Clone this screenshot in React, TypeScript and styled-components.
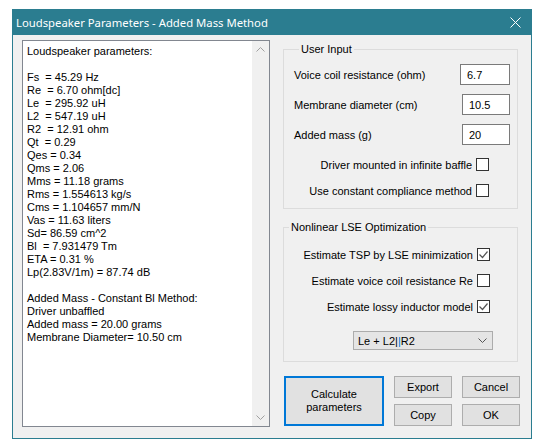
import styled, { createGlobalStyle } from 'styled-components'

const GlobalStyle = createGlobalStyle`
  body {
    margin: 0;
    background: #fff;
    font-family: 'Liberation Sans', Arial, sans-serif;
    font-size: 11px;
    color: #000;
  }
  * {
    box-sizing: border-box;
  }
`

const Page = styled.div`
  padding: 9px 0 0 12px;
`

const Window = styled.div`
  width: 520px;
  height: 430px;
  border: 1px solid #2b7d90;
  background: #f0f0f0;
  display: flex;
  flex-direction: column;
`

const TitleBar = styled.div`
  height: 25px;
  background: #2b7d90;
  color: #fff;
  display: flex;
  align-items: center;
  justify-content: space-between;
  padding: 0 10px 0 3px;
  font-family: 'Noto Sans', 'Segoe UI', sans-serif;
  font-size: 11.3px;
`

const CloseIcon = styled.svg`
  width: 11px;
  height: 11px;
`

const Body = styled.div`
  display: flex;
  gap: 13px;
  padding: 5px 13px 0 9px;
`

const TextPanel = styled.div`
  width: 248px;
  height: 387px;
  border: 1px solid #828790;
  background: #fff;
  display: flex;
`

const Output = styled.pre`
  flex: 1;
  margin: 0;
  padding: 4px 0 0 4px;
  font-family: 'Liberation Sans', Arial, sans-serif;
  font-size: 11px;
  line-height: 13px;
  white-space: pre;
`

const ScrollBar = styled.div`
  width: 17px;
  background: #f0f0f0;
  display: flex;
  flex-direction: column;
  justify-content: space-between;
  align-items: center;
  padding: 6px 0 6px;
`

const Arrow = styled.svg`
  width: 9px;
  height: 5px;
`

const RightColumn = styled.div`
  width: 235px;
  display: flex;
  flex-direction: column;
  gap: 12px;
`

const Group = styled.fieldset<{ $top: number; $pad: string }>`
  margin: ${({ $top }) => $top}px 0 0;
  border: 1px solid #dcdcdc;
  padding: ${({ $pad }) => $pad};
  display: flex;
  flex-direction: column;
  min-width: 0;
`

const Legend = styled.legend`
  margin-left: 5px;
  padding: 0 2px;
  line-height: 13px;
`

const InputRow = styled.div`
  display: flex;
  align-items: center;
  justify-content: space-between;
  height: 21px;
`

const Field = styled.div<{ $w: number }>`
  width: ${({ $w }) => $w}px;
  height: 21px;
  border: 1px solid #7a7a7a;
  background: #fff;
  padding: 0 0 0 6px;
  display: flex;
  align-items: center;
`

const CheckRow = styled.label<{ $right: number }>`
  display: flex;
  align-items: center;
  justify-content: flex-end;
  gap: 4px;
  height: 13px;
  padding-right: ${({ $right }) => $right}px;
`

const Box = styled.span`
  width: 13px;
  height: 13px;
  border: 1px solid #333;
  background: #fff;
  display: flex;
  align-items: center;
  justify-content: center;
`

const Select = styled.div`
  align-self: flex-end;
  margin-right: 24px;
  width: 140px;
  height: 19px;
  border: 1px solid #acacac;
  background: #e5e5e5;
  display: flex;
  align-items: center;
  justify-content: space-between;
  padding: 0 5px 0 4px;
`

const Caret = styled.span`
  color: #0078d7;
`

const Buttons = styled.div`
  display: grid;
  grid-template-columns: 100px 58px 58px;
  grid-template-rows: 22px 22px;
  column-gap: 10px;
  row-gap: 6px;
  margin: 2px 0 0 1px;
`

const Button = styled.button<{ $primary?: boolean }>`
  font: inherit;
  color: #000;
  background: #e1e1e1;
  border: ${({ $primary }) => ($primary ? '2px solid #0078d7' : '1px solid #adadad')};
  padding: 0;
  grid-row: ${({ $primary }) => ($primary ? '1 / span 2' : 'auto')};
  line-height: 13px;
`

const report = `Loudspeaker parameters:

Fs  = 45.29 Hz
Re  = 6.70 ohm[dc]
Le  = 295.92 uH
L2  = 547.19 uH
R2  = 12.91 ohm
Qt  = 0.29
Qes = 0.34
Qms = 2.06
Mms = 11.18 grams
Rms = 1.554613 kg/s
Cms = 1.104657 mm/N
Vas = 11.63 liters
Sd= 86.59 cm^2
Bl  = 7.931479 Tm
ETA = 0.31 %
Lp(2.83V/1m) = 87.74 dB

Added Mass - Constant Bl Method:
Driver unbaffled
Added mass = 20.00 grams
Membrane Diameter= 10.50 cm`

function Check({ checked }: { checked?: boolean }) {
  return (
    <Box>
      {checked && (
        <svg width="11" height="11" viewBox="0 0 11 11">
          <polyline points="1.5,5.5 4.5,8.5 9.5,2.5" fill="none" stroke="#555" strokeWidth="1.2" />
        </svg>
      )}
    </Box>
  )
}

function App() {
  return (
    <Page>
      <GlobalStyle />
      <Window>
        <TitleBar>
          <span>Loudspeaker Parameters - Added Mass Method</span>
          <CloseIcon viewBox="0 0 11 11">
            <path d="M0.5 0.5 L10.5 10.5 M10.5 0.5 L0.5 10.5" stroke="#fff" strokeWidth="1" />
          </CloseIcon>
        </TitleBar>
        <Body>
          <TextPanel>
            <Output>{report}</Output>
            <ScrollBar>
              <Arrow viewBox="0 0 9 5">
                <polyline points="0.5,4.5 4.5,0.5 8.5,4.5" fill="none" stroke="#a0a0a0" />
              </Arrow>
              <Arrow viewBox="0 0 9 5">
                <polyline points="0.5,0.5 4.5,4.5 8.5,0.5" fill="none" stroke="#a0a0a0" />
              </Arrow>
            </ScrollBar>
          </TextPanel>
          <RightColumn>
            <Group $top={3} $pad="8px 7px 11px 10px">
              <Legend>User Input</Legend>
              <InputRow>
                <span>Voice coil resistance (ohm)</span>
                <Field $w={50}>6.7</Field>
              </InputRow>
              <InputRow style={{ marginTop: 9 }}>
                <span>Membrane diameter (cm)</span>
                <Field $w={48}>10.5</Field>
              </InputRow>
              <InputRow style={{ marginTop: 9 }}>
                <span>Added mass (g)</span>
                <Field $w={48}>20</Field>
              </InputRow>
              <CheckRow $right={21} style={{ marginTop: 13 }}>
                Driver mounted in infinite baffle <Check />
              </CheckRow>
              <CheckRow $right={21} style={{ marginTop: 13 }}>
                Use constant compliance method <Check />
              </CheckRow>
            </Group>
            <Group $top={0} $pad="14px 0 11px 0">
              <Legend>Nonlinear LSE Optimization</Legend>
              <CheckRow $right={27}>
                Estimate TSP by LSE minimization <Check checked />
              </CheckRow>
              <CheckRow $right={27} style={{ marginTop: 13 }}>
                Estimate voice coil resistance Re <Check />
              </CheckRow>
              <CheckRow $right={27} style={{ marginTop: 13 }}>
                Estimate lossy inductor model <Check checked />
              </CheckRow>
              <Select style={{ marginTop: 18 }}>
                <span>
                  Le + L2|<Caret>|</Caret>R2
                </span>
                <svg width="9" height="5" viewBox="0 0 9 5">
                  <polyline points="0.5,0.5 4.5,4.5 8.5,0.5" fill="none" stroke="#555" />
                </svg>
              </Select>
            </Group>
            <Buttons>
              <Button $primary>
                Calculate
                <br />
                parameters
              </Button>
              <Button>Export</Button>
              <Button>Cancel</Button>
              <Button>Copy</Button>
              <Button>OK</Button>
            </Buttons>
          </RightColumn>
        </Body>
      </Window>
    </Page>
  )
}

export default App
